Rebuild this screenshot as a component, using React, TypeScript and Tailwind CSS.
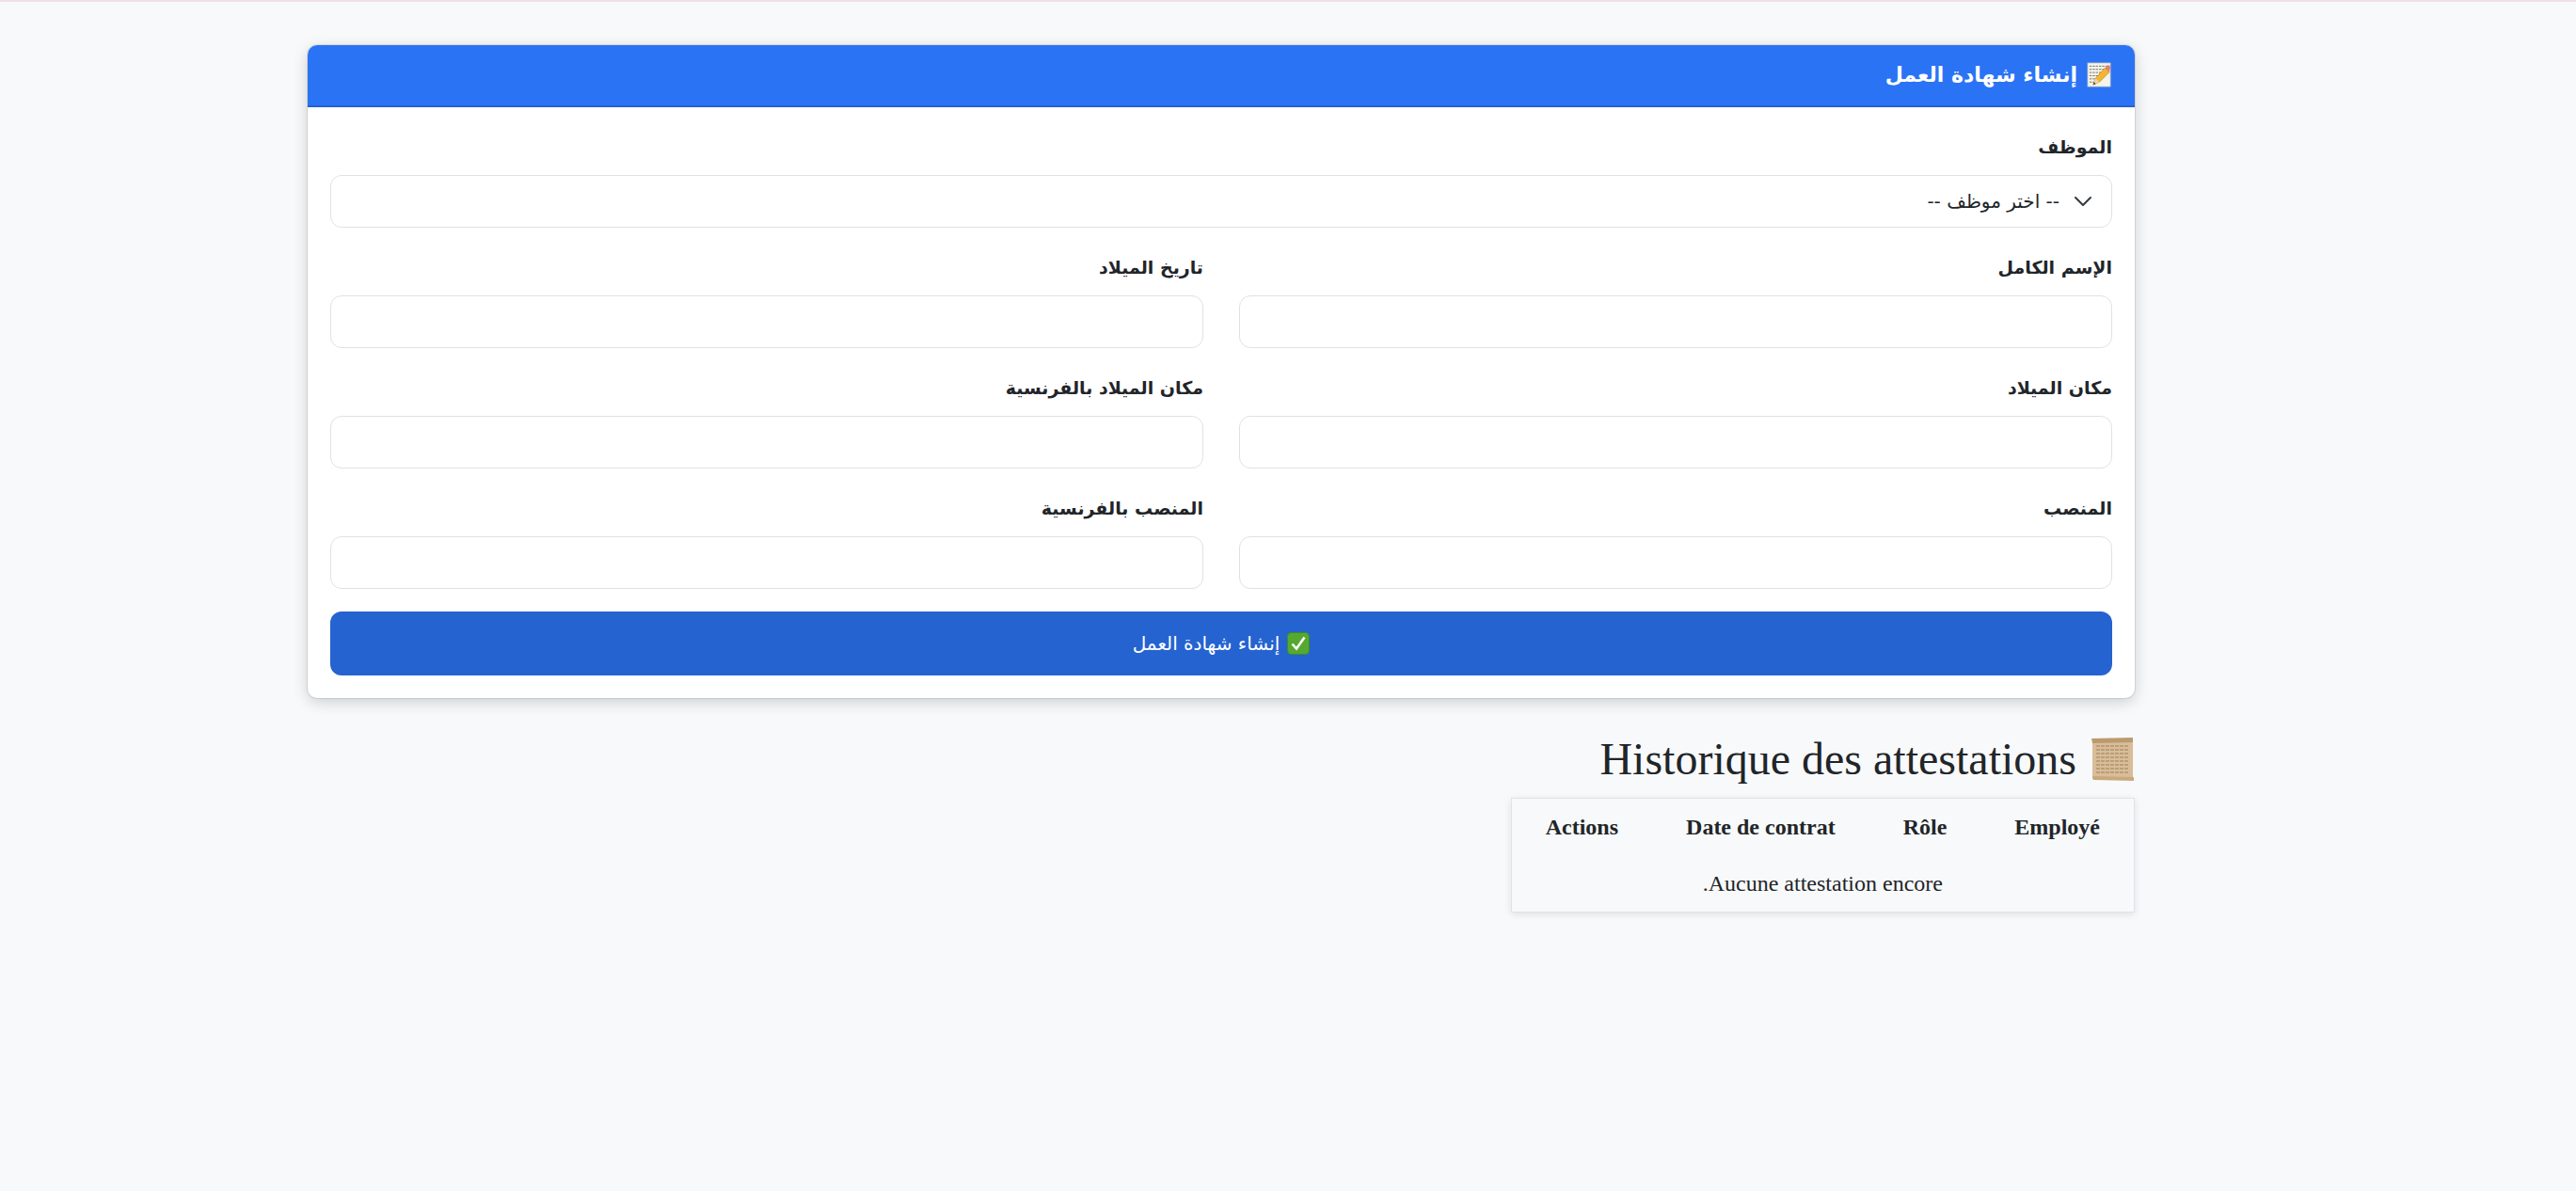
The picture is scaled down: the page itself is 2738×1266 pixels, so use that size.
import { ChevronDown } from "lucide-react";

const serif = "font-['Liberation_Serif','Times_New_Roman',serif]";
const arabic = "font-['DejaVu_Sans',sans-serif]";

function Memo() {
  return (
    <svg viewBox="0 0 28 28" className="w-[27px] h-[27px] shrink-0">
      <rect x="1" y="1" width="25" height="26" fill="#f4f3ec" stroke="#c4c4bc" strokeWidth="0.8" />
      <g stroke="#6f6f69" strokeWidth="1" strokeDasharray="2.5 1">
        <path d="M3 4.5h20M3 8h18M3 11.5h13M3 15h11M3 18.5h8M3 22h6" />
      </g>
      <path d="M7 25l2.5-7L20 6.5l5 4.5L14 22z" fill="#f2b632" stroke="#b47c14" strokeWidth="0.6" />
      <path d="M20 6.5l2-2.2a2.5 2.5 0 0 1 3.6 0 2.6 2.6 0 0 1 0 3.6L25 11z" fill="#e0807a" />
      <path d="M7 25l2.5-7 4.5 4z" fill="#f3d3a6" />
      <path d="M7 25l1-3 2 2z" fill="#3a3a3a" />
    </svg>
  );
}

function Check() {
  return (
    <svg viewBox="0 0 24 24" className="w-6 h-6 shrink-0">
      <rect x="0.5" y="0.5" width="23" height="23" rx="4" fill="#55a92f" stroke="#3f8a2c" />
      <path d="M5.5 12.5l4.5 5L18.5 5.5" fill="none" stroke="#fff" strokeWidth="2.6" />
    </svg>
  );
}

function Scroll() {
  return (
    <svg viewBox="0 0 47 48" className="w-[47px] h-[48px] shrink-0">
      <rect x="2" y="3" width="43" height="42" fill="#d8bd98" />
      <g stroke="#b0946e" strokeWidth="1.3" strokeDasharray="4 1">
        <path d="M6 10h35M6 14h35M6 18h35M6 22h35M6 26h35M6 30h35M6 34h35M6 38h35" />
      </g>
      <path d="M1 2l44-1v5L2 7z" fill="#bb9a6e" />
      <path d="M2 42l44 1v4L3 46z" fill="#c9a87d" />
    </svg>
  );
}

function Field({ label }: { label: string }) {
  return (
    <div>
      <label className="block mb-4 h-[28px] text-[19px] leading-[28px] font-bold text-[#212529]">{label}</label>
      <input className="block w-full h-[56px] bg-white border border-[#dee2e6] rounded-[12px] px-6" />
    </div>
  );
}

export default function App() {
  return (
    <div dir="rtl" className={`min-h-screen bg-[#f8f9fa] border-t-2 border-[#f1dfe8] pt-[46px] pl-[327px] pr-[469px] text-[#212529] ${arabic}`}>
      <section className="bg-white rounded-[10px] shadow-[0_0_0_1px_rgba(0,0,0,0.08),0_4px_16px_rgba(0,0,0,0.18)] overflow-hidden">
        <header className="h-[66px] bg-[#2b73f5] border-b-2 border-[#2362d3] flex items-center gap-[10px] px-6 pb-[2px] text-white text-[22px] font-bold">
          <Memo />
          <span>إنشاء شهادة العمل</span>
        </header>
        <div className="p-6 pt-[28px]">
          <div className="flex flex-col gap-[28px]">
            <div>
              <label className="block mb-4 h-[28px] text-[19px] leading-[28px] font-bold">الموظف</label>
              <div className="relative">
                <select className="block w-full h-[56px] appearance-none bg-white border border-[#dee2e6] rounded-[12px] pr-[55px] text-[20px]">
                  <option>-- اختر موظف --</option>
                </select>
                <ChevronDown strokeWidth={1.5} className="absolute right-[15px] top-[12px] w-8 h-8 text-[#343a40] pointer-events-none" />
              </div>
            </div>
            <div className="grid grid-cols-2 gap-x-[38px] gap-y-[28px]">
              <Field label="الإسم الكامل" />
              <Field label="تاريخ الميلاد" />
              <Field label="مكان الميلاد" />
              <Field label="مكان الميلاد بالفرنسية" />
              <Field label="المنصب" />
              <Field label="المنصب بالفرنسية" />
            </div>
          </div>
          <button className="w-full mt-6 h-[68px] bg-[#2563d1] rounded-[12px] text-white text-[20px] flex items-center justify-center gap-2">
            <Check />
            <span>إنشاء شهادة العمل</span>
          </button>
        </div>
      </section>
      <section className={`pt-[36px] ${serif}`}>
        <h2 className="flex items-center gap-[15px] text-[48px] leading-[57px] font-normal text-[#212529]">
          <Scroll />
          <span>Historique des attestations</span>
        </h2>
        <div className="flex justify-start mt-[13px]">
          <table className="border border-[#e0e3e7] bg-[#f8f9fa] shadow-[0_2px_8px_rgba(0,0,0,0.1)] text-[24px] leading-[28px] border-separate border-spacing-0">
            <thead>
              <tr>
                <th className="px-9 py-4 font-bold">Employé</th>
                <th className="px-9 py-4 font-bold">Rôle</th>
                <th className="px-9 py-4 font-bold">Date de contrat</th>
                <th className="px-9 py-4 font-bold">Actions</th>
              </tr>
            </thead>
            <tbody>
              <tr>
                <td colSpan={4} className="text-center py-4">Aucune attestation encore.</td>
              </tr>
            </tbody>
          </table>
        </div>
      </section>
    </div>
  );
}
